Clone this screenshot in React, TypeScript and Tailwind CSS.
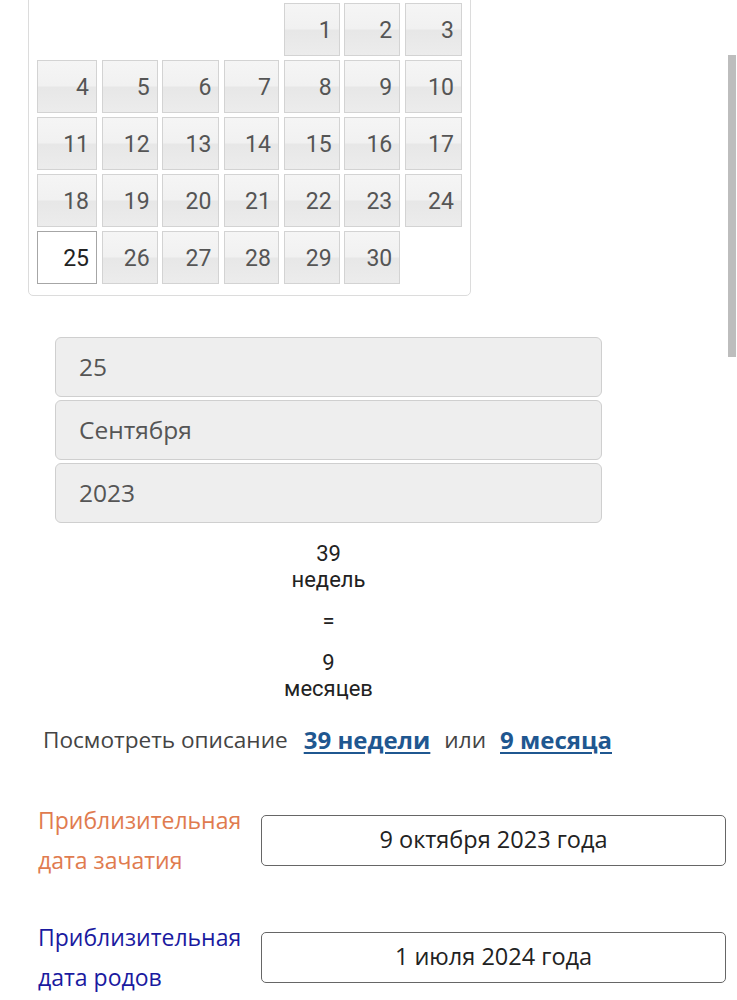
import React from 'react';

const font = { fontFamily: '"Open Sans", Roboto, "Noto Sans", sans-serif' };
const digitFont = { fontFamily: 'Roboto, "Noto Sans", sans-serif' };

// September 2023 starts on a Friday (week begins Monday)
const leadingBlanks = 4;
const daysInMonth = 30;
const selectedDay = 25;

const DayCell: React.FC<{ day: number }> = ({ day }) => {
  const selected = day === selectedDay;
  return (
    <div
      style={digitFont}
      className={
        selected
          ? 'h-[53px] border border-[#a6a6a6] bg-white text-[#222] text-[23px] flex items-center justify-end pr-[7px] pt-[3px]'
          : 'h-[53px] border border-[#d3d3d3] bg-[linear-gradient(to_bottom,#f5f5f5_0%,#f1f1f1_48%,#e7e7e7_52%,#ececec_100%)] text-[#555] text-[23px] flex items-center justify-end pr-[7px] pt-[3px]'
      }
    >
      {day}
    </div>
  );
};

const Calendar: React.FC = () => {
  const cells: (number | null)[] = [
    ...Array.from({ length: leadingBlanks }, () => null),
    ...Array.from({ length: daysInMonth }, (_, i) => i + 1),
  ];
  return (
    <div className="ml-[28px] w-[443px] -mt-[8px] border border-[#dcdcdc] rounded-b-[5px] pt-[10px] pb-[11px] pl-[8px] pr-[7px]">
      <div className="grid grid-cols-[60px_56px_57px_55px_56px_56px_57px] gap-x-[4.67px] gap-y-[4px]">
        {cells.map((d, i) => (d === null ? <div key={`b-${i}`} /> : <DayCell key={d} day={d} />))}
      </div>
    </div>
  );
};

const DateField: React.FC<{ value: string }> = ({ value }) => (
  <div className="h-[60px] rounded-[6px] border border-[#cfcfcf] bg-[#eeeeee] flex items-center pl-[23px] text-[24.5px] text-[#555]">
    {value}
  </div>
);

const ResultRow: React.FC<{ label: string[]; color: string; value: string }> = ({ label, color, value }) => (
  <div className="flex items-center">
    <div className={`w-[261px] pl-[38px] text-[23px] leading-[40px] ${color}`}>
      {label.map((l) => (
        <div key={l}>{l}</div>
      ))}
    </div>
    <div className="w-[465px] h-[51px] rounded-[5px] border border-[#666] flex items-center justify-center text-[23.5px] text-[#222]">
      {value}
    </div>
  </div>
);

export default function App() {
  return (
    <div className="relative w-[737px] h-[1000px] overflow-hidden bg-white" style={font}>
      <Calendar />

      <div className="ml-[55px] w-[547px] mt-[41px] flex flex-col gap-[3px]">
        <DateField value="25" />
        <DateField value="Сентября" />
        <DateField value="2023" />
      </div>

      <div
        style={digitFont}
        className="w-[657px] mt-[18px] flex flex-col items-center text-[22px] leading-[26px] text-[#222]"
      >
        <p className="text-center">
          39
          <br />
          недель
        </p>
        <p className="mt-[15px]">=</p>
        <p className="mt-[16px] text-center">
          9
          <br />
          месяцев
        </p>
      </div>

      <div className="mt-[23px] pl-[43px] text-[22.6px] leading-[30px] text-[#444] flex items-center">
        <span>Посмотреть описание</span>
        <a href="#" className="ml-[16px] text-[24px] font-bold text-[#1f5790] underline underline-offset-[3px]">
          39 недели
        </a>
        <span className="ml-[14px]">или</span>
        <a href="#" className="ml-[14px] text-[24px] font-bold text-[#1f5790] underline underline-offset-[3px]">
          9 месяца
        </a>
      </div>

      <div className="mt-[45px] flex flex-col gap-[37px]">
        <ResultRow label={['Приблизительная', 'дата зачатия']} color="text-[#e07b4f]" value="9 октября 2023 года" />
        <ResultRow label={['Приблизительная', 'дата родов']} color="text-[#1a1aa0]" value="1 июля 2024 года" />
      </div>

      <div className="absolute right-[1px] top-[55px] w-[8px] h-[302px] bg-[#bdbdbd]" />
    </div>
  );
}
